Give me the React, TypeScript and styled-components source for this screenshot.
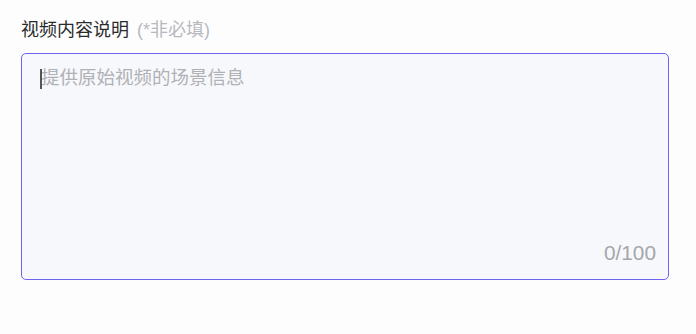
import React, { useState } from 'react';
import styled, { createGlobalStyle } from 'styled-components';

const GlobalStyle = createGlobalStyle`
  html, body {
    margin: 0;
    padding: 0;
    background: #fdfdfe;
    font-family: "Liberation Sans", "Noto Sans CJK SC", sans-serif;
  }
`;

const Page = styled.div`
  width: 696px;
  height: 334px;
  box-sizing: border-box;
  padding: 18px 0 0 21px;
`;

const Label = styled.div`
  font-size: 18px;
  line-height: 24px;
  color: #2b2b2b;
  margin-bottom: 11px;
`;

const Optional = styled.span`
  margin-left: 3px;
  color: #b9b9bd;
`;

const Field = styled.div`
  position: relative;
  width: 648px;
  height: 227px;
  box-sizing: border-box;
  border: 1px solid #6d62f1;
  border-radius: 5px;
  background: #f7f8fc;
`;

const Input = styled.textarea`
  display: block;
  width: 100%;
  height: 100%;
  box-sizing: border-box;
  padding: 12px 19px 40px 19px;
  border: none;
  outline: none;
  resize: none;
  background: transparent;
  font-family: inherit;
  font-size: 18.5px;
  line-height: 24px;
  color: #333;

  &::placeholder {
    color: #b0b1b5;
  }
`;

const Caret = styled.span`
  position: absolute;
  left: 18px;
  top: 15px;
  width: 2px;
  height: 20px;
  background: #555;
  pointer-events: none;
`;

const Counter = styled.span`
  position: absolute;
  right: 12px;
  bottom: 14px;
  font-size: 20.8px;
  line-height: 24px;
  color: #a5a6aa;
`;

export default function App() {
  const [text, setText] = useState('');
  return (
    <>
      <GlobalStyle />
      <Page>
        <Label>
          视频内容说明<Optional> (*非必填)</Optional>
        </Label>
        <Field>
          <Input
            maxLength={100}
            placeholder="提供原始视频的场景信息"
            value={text}
            onChange={(e) => setText(e.target.value)}
          />
          {text.length === 0 && <Caret />}
          <Counter>{text.length}/100</Counter>
        </Field>
      </Page>
    </>
  );
}
